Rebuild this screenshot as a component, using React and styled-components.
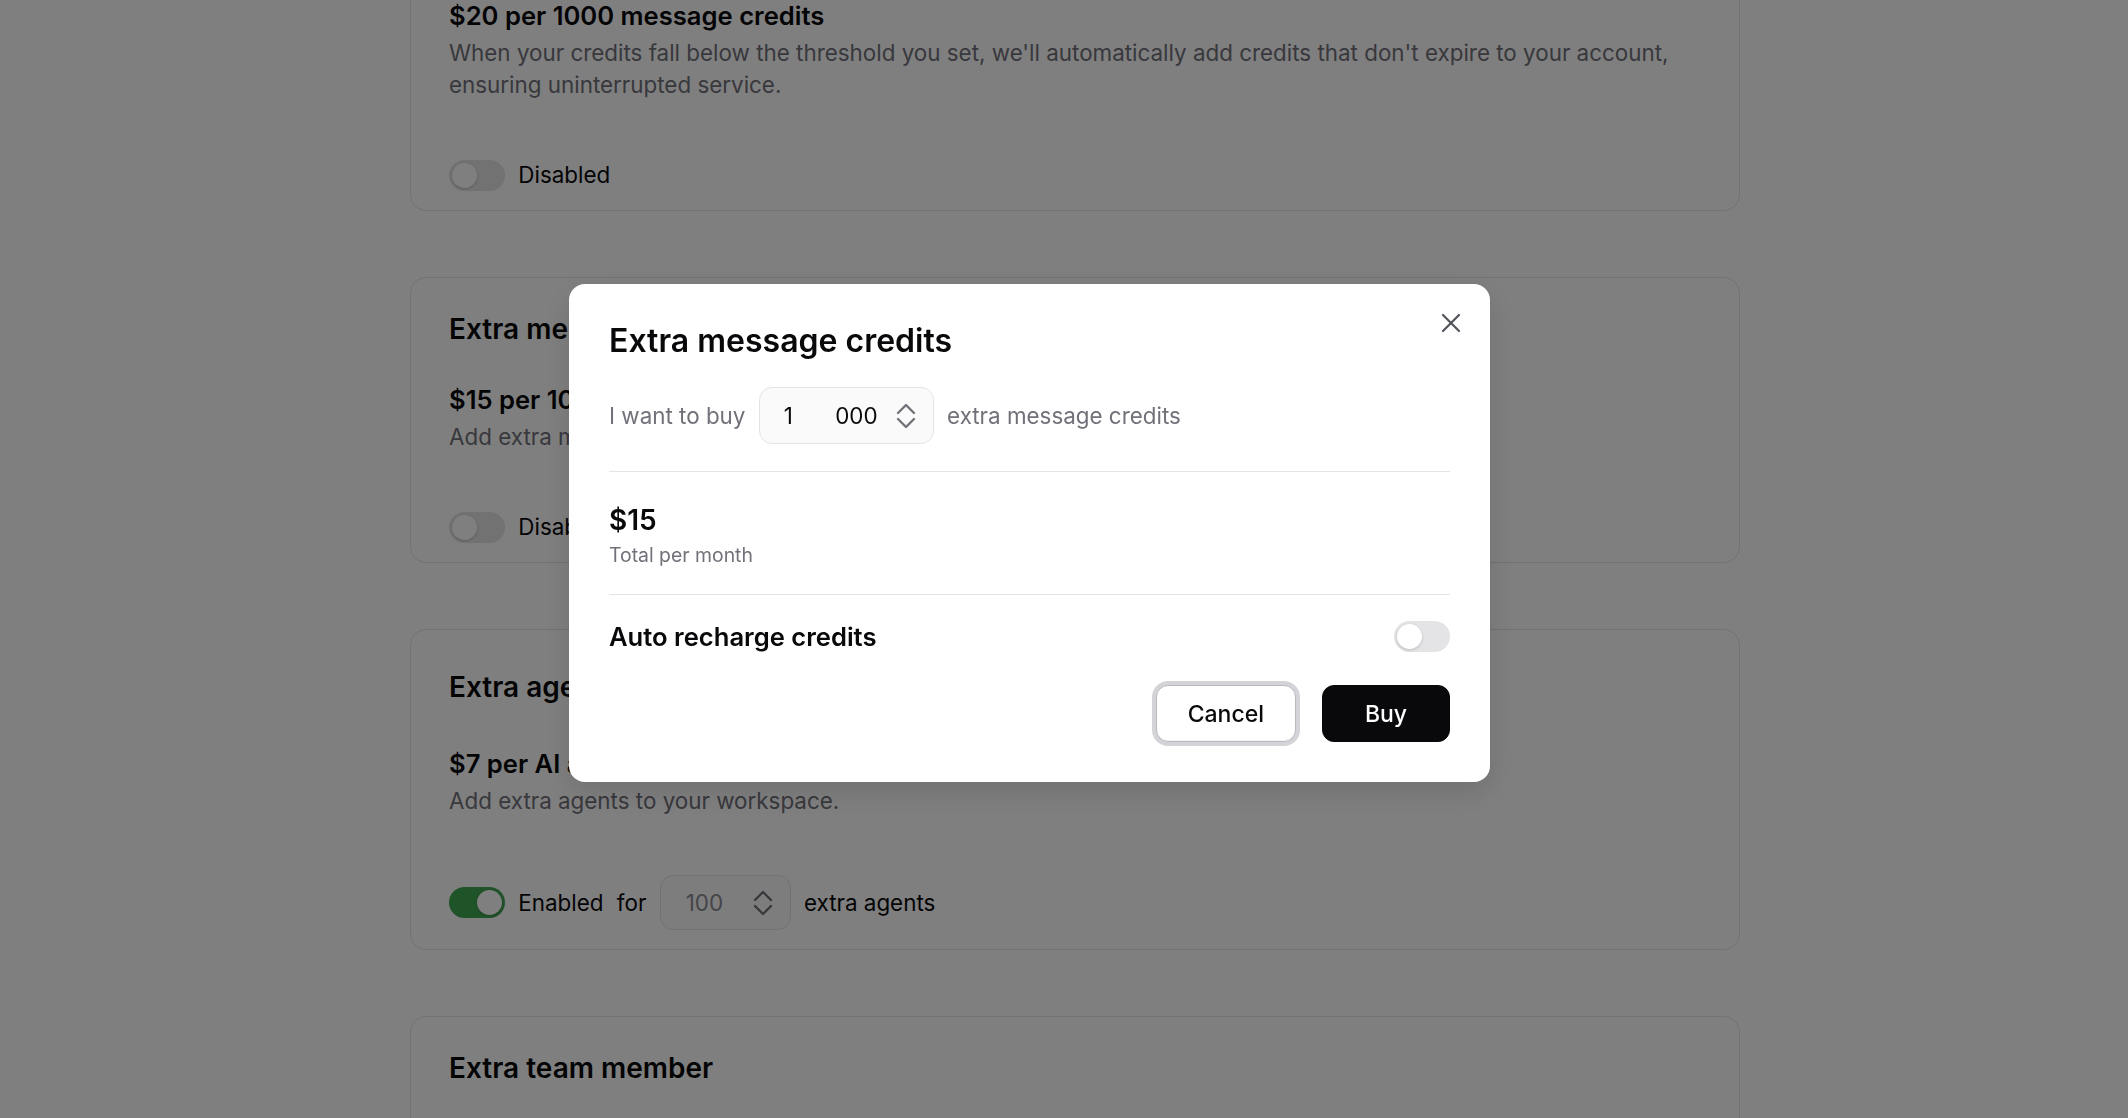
import React from "react";
import styled, { createGlobalStyle } from "styled-components";
import { X } from "lucide-react";

const GlobalStyle = createGlobalStyle`
  html, body {
    margin: 0;
    padding: 0;
    height: 100%;
    overflow: hidden;
    background: #fff;
  }
  body {
    font-family: "Inter", "Noto Sans", sans-serif;
    color: #09090b;
    -webkit-font-smoothing: antialiased;
  }
  * {
    box-sizing: border-box;
  }
`;

const Page = styled.main`
  display: flex;
  flex-direction: column;
  gap: 66px;
  width: 1330px;
  margin: -107px 0 0 410px;
`;

const Card = styled.section`
  border: 1px solid #e4e4e7;
  border-radius: 16px;
  background: #fff;
  padding: 30px 38px 19px;
`;

const CardHeader = styled.div`
  display: flex;
  align-items: center;
  justify-content: space-between;
  min-height: ${(p) => (p.$tall ? 54 : 42)}px;
`;

const CardTitle = styled.h2`
  margin: 0;
  font-size: 28px;
  line-height: 42px;
  font-weight: 600;
`;

const PriceTitle = styled.h3`
  margin: 32px 0 0;
  font-size: 25.6px;
  line-height: 36px;
  font-weight: 600;
`;

const Description = styled.p`
  margin: 3px 0 0;
  font-size: 22.4px;
  line-height: 32px;
  color: #71717a;
`;

const ControlRow = styled.div`
  display: flex;
  align-items: center;
  gap: 13.33px;
  margin-top: 58px;
  font-size: 22.4px;
  line-height: 32px;
`;

const Switch = styled.span`
  position: relative;
  flex: none;
  display: block;
  width: 56px;
  height: 31px;
  border-radius: 999px;
  background: ${(p) => (p.$on ? "#3fa651" : "#e4e4e7")};
  &::after {
    content: "";
    position: absolute;
    top: 3px;
    left: ${(p) => (p.$on ? "28px" : "3px")};
    width: 25px;
    height: 25px;
    border-radius: 50%;
    background: #fff;
    box-shadow: 0 1px 3px rgba(0, 0, 0, 0.18);
  }
`;

const NumberField = styled.div`
  display: flex;
  align-items: center;
  justify-content: space-between;
  flex: none;
  width: ${(p) => p.$w}px;
  height: ${(p) => p.$h}px;
  padding: 0 17px 0 ${(p) => p.$pl}px;
  border: 1px solid #e4e4e7;
  border-radius: 13px;
  background: #fafafa;
  font-size: 22.4px;
  color: ${(p) => (p.$muted ? "#8a8a92" : "#09090b")};
`;

const Amount = styled.span`
  white-space: pre;
  word-spacing: ${(p) => p.$spread || 0}px;
`;

const Stepper = () => (
  <svg
    width="20"
    height="26"
    viewBox="0 0 20 26"
    fill="none"
    stroke="#71717a"
    strokeWidth="2.4"
    strokeLinecap="round"
    strokeLinejoin="round"
  >
    <path d="M2 10 L10 2 L18 10" />
    <path d="M2 16 L10 24 L18 16" />
  </svg>
);

const Overlay = styled.div`
  position: fixed;
  inset: 0;
  background: rgba(0, 0, 0, 0.5);
`;

const Dialog = styled.div`
  position: fixed;
  left: 569px;
  top: 284px;
  width: 921px;
  background: #fff;
  border-radius: 16px;
  padding: 37px 40px 40px;
  box-shadow: 0 10px 30px rgba(0, 0, 0, 0.12);
`;

const CloseButton = styled.button`
  position: absolute;
  top: 23px;
  right: 23px;
  width: 32px;
  height: 32px;
  padding: 0;
  border: 0;
  background: transparent;
  color: #52525b;
  display: flex;
  align-items: center;
  justify-content: center;
  cursor: pointer;
`;

const DialogTitle = styled.h2`
  margin: 0 0 26px;
  font-size: 32px;
  line-height: 40px;
  font-weight: 600;
`;

const BuyRow = styled.div`
  display: flex;
  align-items: center;
  gap: 13.33px;
  font-size: 22.4px;
  color: #71717a;
`;

const Divider = styled.hr`
  margin: ${(p) => p.$top}px 0 0;
  border: 0;
  border-top: 1px solid #e4e4e7;
`;

const Total = styled.div`
  margin-top: 32px;
  font-size: 28px;
  line-height: 32px;
  font-weight: 600;
`;

const TotalLabel = styled.div`
  margin-top: 7px;
  font-size: 19.4px;
  line-height: 24px;
  color: #71717a;
`;

const RechargeRow = styled.div`
  display: flex;
  align-items: center;
  justify-content: space-between;
  margin-top: 26px;
`;

const RechargeLabel = styled.span`
  font-size: 25.6px;
  font-weight: 600;
`;

const Actions = styled.div`
  display: flex;
  justify-content: flex-end;
  gap: 26px;
  margin-top: 33px;
`;

const Button = styled.button`
  height: 57px;
  min-width: 128px;
  padding: 0 31px;
  border-radius: 12px;
  font-family: inherit;
  font-size: 23px;
  font-weight: 500;
  cursor: pointer;
  ${(p) =>
    p.$solid
      ? `
    background: #09090b;
    color: #fff;
    border: 1px solid #09090b;
  `
      : `
    background: #fff;
    color: #09090b;
    border: 1px solid #b9b9c0;
    box-shadow: 0 0 0 4px #d4d4d8, inset 0 -1px 1px rgba(0,0,0,0.06);
  `}
`;

const Label = styled.span``;

export default function App() {
  return (
    <>
      <GlobalStyle />
      <Page>
        <Card>
          <CardHeader>
            <CardTitle>Auto recharge credits</CardTitle>
          </CardHeader>
          <PriceTitle>$20 per 1000 message credits</PriceTitle>
          <Description>
            When your credits fall below the threshold you set, we'll automatically add credits
            that don't expire to your account, ensuring uninterrupted service.
          </Description>
          <ControlRow>
            <Switch />
            <Label>Disabled</Label>
          </ControlRow>
        </Card>

        <Card>
          <CardHeader>
            <CardTitle>Extra message credits</CardTitle>
          </CardHeader>
          <PriceTitle>$15 per 1000 message credits</PriceTitle>
          <Description>Add extra message credits to your workspace.</Description>
          <ControlRow>
            <Switch />
            <Label>Disabled</Label>
          </ControlRow>
        </Card>

        <Card>
          <CardHeader $tall>
            <CardTitle>Extra agents</CardTitle>
          </CardHeader>
          <PriceTitle>$7 per AI agent</PriceTitle>
          <Description>Add extra agents to your workspace.</Description>
          <ControlRow>
            <Switch $on />
            <Label>Enabled</Label>
            <Label>for</Label>
            <NumberField $w={131} $h={55} $pl={25} $muted>
              <Amount>100</Amount>
              <Stepper />
            </NumberField>
            <Label>extra agents</Label>
          </ControlRow>
        </Card>

        <Card>
          <CardHeader>
            <CardTitle>Extra team member</CardTitle>
          </CardHeader>
          <PriceTitle>$10 per team member</PriceTitle>
          <Description>Invite extra team members to your workspace.</Description>
        </Card>
      </Page>

      <Overlay />

      <Dialog role="dialog" aria-modal="true">
        <CloseButton aria-label="Close">
          <X size={32} strokeWidth={1.6} />
        </CloseButton>
        <DialogTitle>Extra message credits</DialogTitle>
        <BuyRow>
          <span>I want to buy</span>
          <NumberField $w={175} $h={57} $pl={24}>
            <Amount $spread={36}>1 000</Amount>
            <Stepper />
          </NumberField>
          <span>extra message credits</span>
        </BuyRow>
        <Divider $top={27} />
        <Total>$15</Total>
        <TotalLabel>Total per month</TotalLabel>
        <Divider $top={27} />
        <RechargeRow>
          <RechargeLabel>Auto recharge credits</RechargeLabel>
          <Switch />
        </RechargeRow>
        <Actions>
          <Button>Cancel</Button>
          <Button $solid>Buy</Button>
        </Actions>
      </Dialog>
    </>
  );
}
